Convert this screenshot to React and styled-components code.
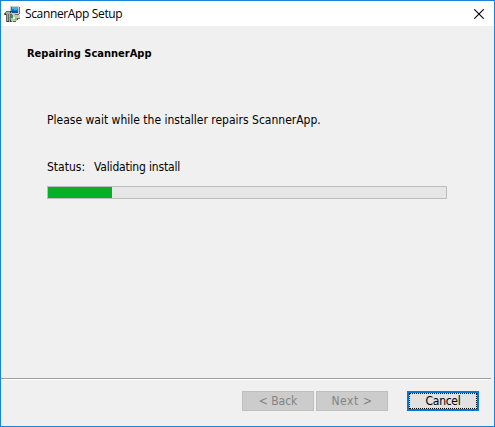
import React from "react";
import styled, { createGlobalStyle } from "styled-components";

const GlobalStyle = createGlobalStyle`
  * { box-sizing: border-box; }
  body { margin: 0; overflow: hidden; }
`;

const Window = styled.main`
  display: flex;
  flex-direction: column;
  width: 495px;
  height: 427px;
  border: 1px solid #1883d7;
  background: #f0f0f0;
  color: #000;
  font: 12px/16px "DejaVu Sans Condensed", "DejaVu Sans", sans-serif;
  font-stretch: condensed;
`;

const TitleBar = styled.header`
  display: flex;
  align-items: center;
  height: 25px;
  padding: 0 10px 0 3px;
  background: #fff;
`;

const Title = styled.span`
  flex: 1;
  margin-left: 5px;
  font: 12px/24px "Open Sans", sans-serif;
  letter-spacing: -0.36px;
`;

const CloseButton = styled.button`
  display: flex;
  padding: 0;
  border: 0;
  background: none;
`;

const Content = styled.section`
  flex: 1;
  padding: 20px 47px 0 46px;
`;

const Text = styled.p`
  margin: ${(p) => p.$top || 0}px 0 0;
  white-space: pre;
  letter-spacing: ${(p) => p.$tracking || 0}px;
`;

const Heading = styled.h1`
  margin: 0 0 0 -20px;
  font-size: 11px;
  line-height: 16px;
  font-weight: 700;
`;

const StatusRow = styled.div`
  display: flex;
  gap: 9px;
  margin-top: 31px;
`;

const Track = styled.div`
  width: 400px;
  height: 13px;
  margin-top: 11px;
  border: 1px solid #bcbcbc;
  background: #e6e6e6;
`;

const Fill = styled.div`
  width: 64px;
  height: 11px;
  background: #06b025;
`;

const Footer = styled.footer`
  height: 48px;
`;

const Divider = styled.div`
  width: 490px;
  height: 2px;
  border-top: 1px solid #a0a0a0;
  border-bottom: 1px solid #fff;
`;

const Actions = styled.div`
  display: flex;
  justify-content: flex-end;
  gap: 2px;
  padding: 11px 15px 0 0;
`;

const Button = styled.button`
  width: 72px;
  height: 20px;
  padding: 0;
  border: 1px solid #bfbfbf;
  background: #ccc;
  color: #838383;
  font: inherit;
  font-stretch: condensed;
  line-height: 18px;
  letter-spacing: ${(p) => p.$tracking || 0}px;
`;

const DefaultButton = styled(Button)`
  margin-left: 17px;
  border: 2px solid #0078d7;
  outline: 1px dotted #000;
  outline-offset: -3px;
  background: #e1e1e1;
  color: #000;
  line-height: 16px;
`;

function InstallerIcon() {
  return (
    <svg width="16" height="16" viewBox="0 0 16 16" shapeRendering="crispEdges" aria-hidden="true">
      <path fill="#c9ccc8" d="M6 0h9v8H6zM8 9h8v3H8z" />
      <path fill="#6c7073" d="M15 1h1v7h-1zM7 8h8v1H7zM12 12h4v1h-4z" />
      <path fill="#087fc9" d="M7 1h7v6H7z" />
      <path fill="#37b5ef" d="M8 1h6v2H8zM10 3h3v1h-3z" />
      <path fill="#07569d" d="M7 5h7v2H7z" />
      <path fill="#666966" d="M2 5h5v1H2zM0 7h2v2H0zM1 6h1v1H1zM2 8h1v8H2zM4 8h1v8H4zM6 8h2v8H6z" />
      <path fill="#a7aaa5" d="M2 6h6v2H2zM3 8h1v7H3zM5 8h1v8H5z" />
      <path fill="#303330" d="M3 15h2v1H3zM6 14h1v2H6zM1 8h1v1H1zM6 5h1v2H6z" />
      <path fill="#bec5bd" d="M8 8h3v1h2v2h1v3h-1v1h-2v1H8v-1H7V9h1z" />
      <path fill="#16a34c" d="M7 9h2v3H7z" />
      <path fill="#80c747" d="M10 12h3v2h-3z" />
      <path fill="#e9e66a" d="M9 9h1v2H9z" />
      <path fill="#fff" d="M9 11h2v2H9z" />
      <path fill="#5d625e" d="M13 12h1v2h-1zM9 15h3v1H9z" />
    </svg>
  );
}

export default function App() {
  return (
    <>
      <GlobalStyle />
      <Window>
        <TitleBar>
          <InstallerIcon />
          <Title>ScannerApp Setup</Title>
          <CloseButton aria-label="Close">
            <svg width="10" height="10" viewBox="0 0 10 10">
              <path d="M.3.3l9.4 9.4M9.7.3L.3 9.7" stroke="#000" strokeWidth="1.1" />
            </svg>
          </CloseButton>
        </TitleBar>
        <Content>
          <Heading>Repairing ScannerApp</Heading>
          <Text $top={50}>Please wait while the installer repairs ScannerApp.</Text>
          <StatusRow>
            <Text>Status:</Text>
            <Text $tracking={-0.18}>Validating install</Text>
          </StatusRow>
          <Track role="progressbar" aria-valuenow={16} aria-valuemin={0} aria-valuemax={100}>
            <Fill />
          </Track>
        </Content>
        <Footer>
          <Divider />
          <Actions>
            <Button disabled>&lt; Back</Button>
            <Button disabled $tracking={0.6}>Next &gt;</Button>
            <DefaultButton $tracking={-0.3}>Cancel</DefaultButton>
          </Actions>
        </Footer>
      </Window>
    </>
  );
}
